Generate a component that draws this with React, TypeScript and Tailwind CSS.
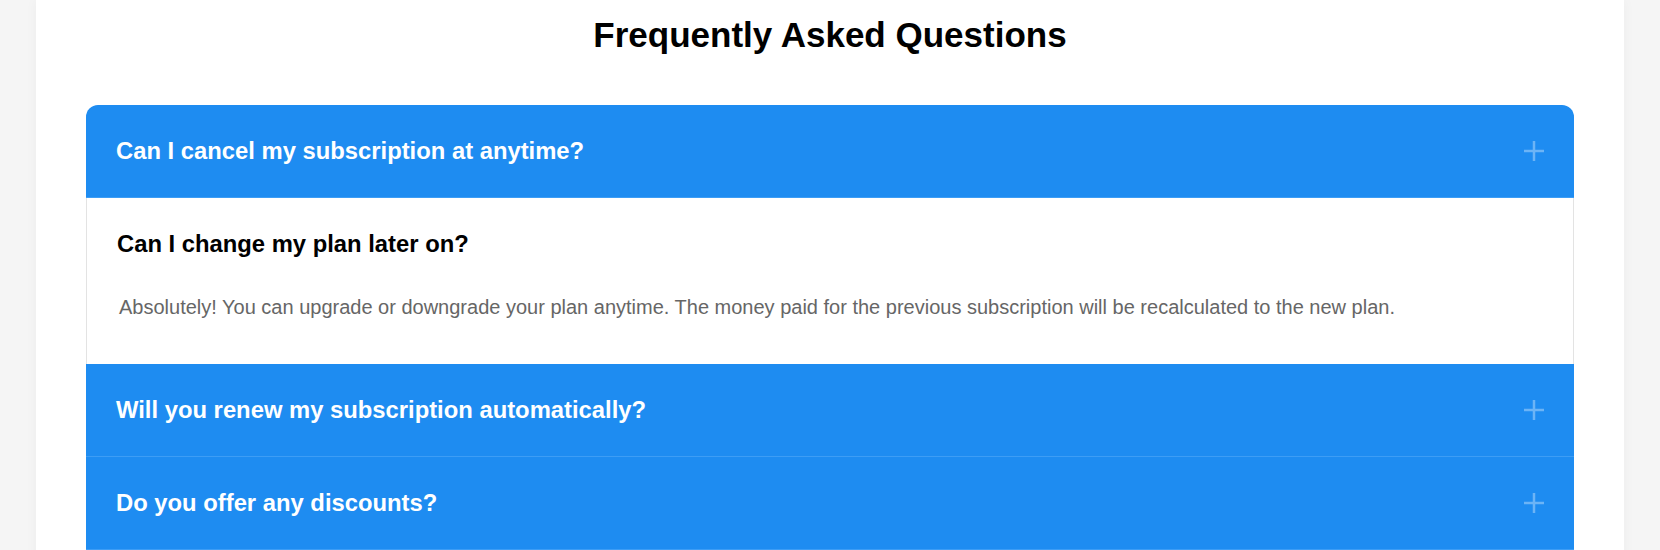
const faqs = [
  { q: "Can I cancel my subscription at anytime?", a: "" },
  {
    q: "Can I change my plan later on?",
    a: "Absolutely! You can upgrade or downgrade your plan anytime. The money paid for the previous subscription will be recalculated to the new plan.",
  },
  { q: "Will you renew my subscription automatically?", a: "" },
  { q: "Do you offer any discounts?", a: "" },
  { q: "Is there a free trial available?", a: "" },
];

function PlusIcon() {
  return (
    <svg width="20" height="20" viewBox="0 0 20 20" className="shrink-0">
      <path d="M10 0v20M0 10h20" stroke="rgba(255,255,255,0.35)" strokeWidth="2.5" fill="none" />
    </svg>
  );
}

function FaqItem(props: { q: string; a: string; open: boolean; first: boolean }) {
  if (props.open) {
    return (
      <div className="bg-white border-x border-[#e3e3e3] pt-[32px] pb-[42px]">
        <h3 className="px-[30px] text-[23.8px] leading-[28px] font-bold text-black">{props.q}</h3>
        <p className="mt-[34px] pl-[32px] pr-[30px] text-[20px] leading-[30px] text-[#666]">{props.a}</p>
      </div>
    );
  }
  return (
    <div
      className={
        "flex items-center justify-between bg-[#1e8cf1] border-b border-[#3d9df5] px-[30px] py-[32px] " +
        (props.first ? "rounded-t-[12px]" : "")
      }
    >
      <h3 className="text-[23.8px] leading-[28px] font-bold text-white">{props.q}</h3>
      <PlusIcon />
    </div>
  );
}

export default function App() {
  return (
    <div className="min-h-screen bg-[#f5f5f5] font-['Liberation_Sans',Arial,sans-serif]">
      <div className="mx-auto w-[1588px] bg-white shadow-[0_0_12px_rgba(0,0,0,0.04)] px-[50px] pt-[15px] pb-[40px]">
        <h2 className="text-center text-[35px] leading-[40px] font-bold text-black">Frequently Asked Questions</h2>
        <div className="mt-[50px] flex flex-col">
          {faqs.map((f, i) => (
            <FaqItem key={f.q} q={f.q} a={f.a} open={i === 1} first={i === 0} />
          ))}
        </div>
      </div>
    </div>
  );
}
